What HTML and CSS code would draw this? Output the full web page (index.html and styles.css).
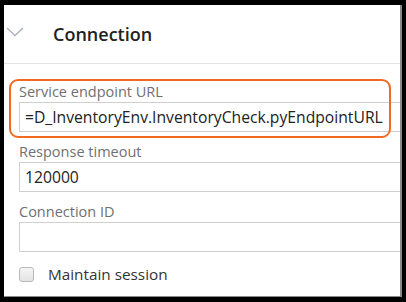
FILE: index.html
```html
<!DOCTYPE html>
<html lang="en">
<head>
    <meta charset="UTF-8" />
    <title>Connection</title>
    <link rel="stylesheet" href="styles.css">
</head>
<body>
<div class="panel">
    <header class="section-head">
        <svg class="chevron" width="18" height="10" viewBox="0 0 18 10">
            <path d="M1 1 L9 8.5 L17 1" fill="none" stroke="#a9b3c2" stroke-width="1.4" />
        </svg>
        <h2>Connection</h2>
    </header>

    <div class="fields">
        <div class="field">
            <label for="endpoint">Service endpoint URL</label>
            <input type="text" id="endpoint" class="form-control" value="=D_InventoryEnv.InventoryCheck.pyEndpointURL" />
        </div>
        <div class="field">
            <label for="timeout">Response timeout</label>
            <input type="text" id="timeout" class="form-control" value="120000" />
        </div>
        <div class="field">
            <label for="connId">Connection ID</label>
            <input type="text" id="connId" class="form-control" value="" />
        </div>
        <div class="check-row">
            <span class="checkbox"></span>
            <span>Maintain session</span>
        </div>
    </div>

    <!-- highlight callout -->
    <div class="highlight"></div>
</div>
</body>
</html>
```

FILE: styles.css
```css
* {
    box-sizing: border-box;
    margin: 0;
    padding: 0;
}

body {
    width: 406px;
    height: 302px;
    background: #000;
    overflow: hidden;
    font-family: 'Open Sans', 'Noto Sans', sans-serif;
    color: #333;
}

.panel {
    position: relative;
    margin: 5px 0 0 4px;
    width: 398px;
    height: 292px;
    background: #fff;
    border-right: 2px solid #8a8a8a;
    border-bottom: 1px solid #8a8a8a;
    overflow: hidden;
}

.section-head {
    height: 59px;
    display: flex;
    align-items: center;
    padding-left: 2px;
    border-bottom: 1px solid #e4e4e4;
}

.chevron {
    margin-top: -4px;
}

.section-head h2 {
    margin-left: 29px;
    font-size: 18px;
    font-weight: 600;
    color: #222;
    padding-bottom: 1px;
}

.fields {
    padding: 18px 0 0 15px;
}

.field {
    margin-bottom: 10px;
}

.field label {
    display: block;
    height: 20px;
    line-height: 20px;
    font-size: 14.5px;
    color: #707070;
}

.form-control {
    display: block;
    width: 420px;
    height: 30px;
    padding: 0 5px;
    border: 1px solid #cfcfcf;
    background: #fff;
    font-family: 'Open Sans', 'Noto Sans', sans-serif;
    font-size: 15.7px;
    color: #222;
    outline: none;
}

.check-row {
    display: flex;
    align-items: center;
    gap: 14px;
    margin-top: 12px;
    font-size: 15.3px;
    color: #333;
}

.checkbox {
    width: 15px;
    height: 15px;
    border: 1px solid #b9b9b9;
    border-radius: 3px;
    background: linear-gradient(#f4f4f4, #e4e4e4);
}

.highlight {
    position: absolute;
    left: 5px;
    top: 74px;
    width: 382px;
    height: 59px;
    border: 2px solid #f26a1f;
    border-radius: 9px;
}
```
